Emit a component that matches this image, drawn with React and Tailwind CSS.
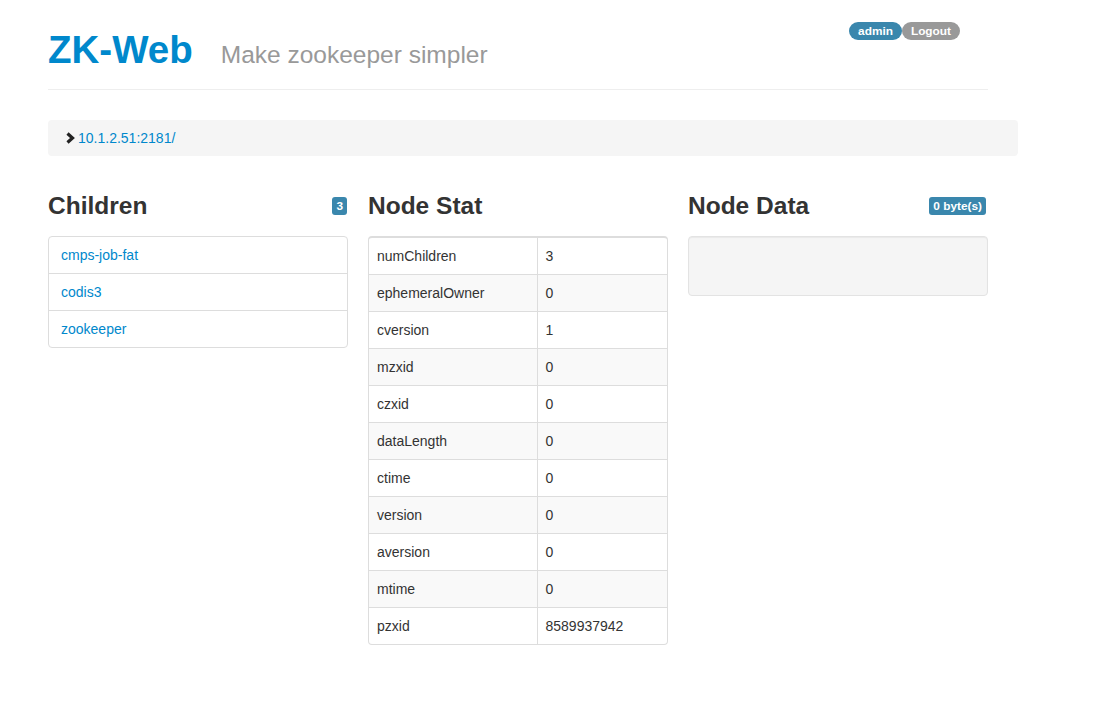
import React from 'react';

const children = ['cmps-job-fat', 'codis3', 'zookeeper'];

const stats = [
  ['numChildren', '3'],
  ['ephemeralOwner', '0'],
  ['cversion', '1'],
  ['mzxid', '0'],
  ['czxid', '0'],
  ['dataLength', '0'],
  ['ctime', '0'],
  ['version', '0'],
  ['aversion', '0'],
  ['mtime', '0'],
  ['pzxid', '8589937942'],
];

function Label({ children, className = '' }) {
  return (
    <span
      className={`inline-block bg-[#3a87ad] text-white font-bold text-[11.844px] leading-[14px] px-1 py-[2px] rounded-[3px] ${className}`}
    >
      {children}
    </span>
  );
}

function SectionTitle({ title, badge, badgeClass }) {
  return (
    <h3 className="flex items-center justify-between my-[10px] text-[24.5px] leading-10 font-bold text-[#333]">
      <span>{title}</span>
      {badge && <Label className={badgeClass}>{badge}</Label>}
    </h3>
  );
}

export default function App() {
  return (
    <div className="min-h-screen bg-white text-[14px] leading-5 text-[#333] font-['Liberation_Sans',Arial,sans-serif]">
      <div className="ml-[48px] w-[970px] pt-5">
        {/* Page header */}
        <div className="w-[940px] flex items-start justify-between border-b border-[#eee] pb-[14px] mb-[30px]">
          <h1 className="mt-[10px] flex items-baseline leading-10">
            <span className="text-[38.5px] font-bold text-[#0088cc]">ZK-Web</span>
            <small className="ml-[28px] text-[24.5px] font-normal text-[#999]">Make zookeeper simpler</small>
          </h1>
          <div className="mt-[2px] mr-[28px] flex">
            <span className="bg-[#3a87ad] text-white font-bold text-[11.844px] leading-[14px] px-[9px] py-[2px] rounded-[9px]">
              admin
            </span>
            <span className="bg-[#999] text-white font-bold text-[11.844px] leading-[14px] px-[9px] py-[2px] rounded-[9px]">
              Logout
            </span>
          </div>
        </div>

        {/* Breadcrumb */}
        <div className="flex items-center bg-[#f5f5f5] rounded-[4px] px-[15px] py-2 mb-5">
          <svg width="14" height="14" viewBox="0 0 14 14" className="shrink-0">
            <polyline points="4.5,2.5 9.5,7 4.5,11.5" fill="none" stroke="#222" strokeWidth="3.2" />
          </svg>
          <a className="ml-[1px] text-[#0088cc]">10.1.2.51:2181/</a>
        </div>

        {/* Columns */}
        <div className="w-[940px] grid grid-cols-3 gap-5">
          <div>
            <SectionTitle title="Children" badge="3" badgeClass="mr-[1px]" />
            <div className="border border-[#ddd] rounded-[4px] overflow-hidden">
              {children.map((c, i) => (
                <div key={c} className={`px-3 py-2 ${i > 0 ? 'border-t border-[#ddd]' : ''}`}>
                  <a className="text-[#0088cc]">{c}</a>
                </div>
              ))}
            </div>
          </div>

          <div>
            <SectionTitle title="Node Stat" />
            <div className="border border-[#ddd] border-t-2 rounded-[4px] overflow-hidden">
              <table className="w-full border-collapse">
                <tbody>
                  {stats.map(([k, v], i) => (
                    <tr
                      key={k}
                      className={`${i > 0 ? 'border-t border-[#ddd]' : ''} ${i % 2 === 1 ? 'bg-[#f9f9f9]' : ''}`}
                    >
                      <td className="w-[168px] px-2 py-2 border-r border-[#ddd]">{k}</td>
                      <td className="px-2 py-2">{v}</td>
                    </tr>
                  ))}
                </tbody>
              </table>
            </div>
          </div>

          <div>
            <SectionTitle title="Node Data" badge="0 byte(s)" badgeClass="mr-[2px]" />
            <div className="min-h-5 p-[19px] bg-[#f5f5f5] border border-[#e3e3e3] rounded-[4px] shadow-[inset_0_1px_1px_rgba(0,0,0,0.05)]">
              <div className="h-5" />
            </div>
          </div>
        </div>
      </div>
    </div>
  );
}
